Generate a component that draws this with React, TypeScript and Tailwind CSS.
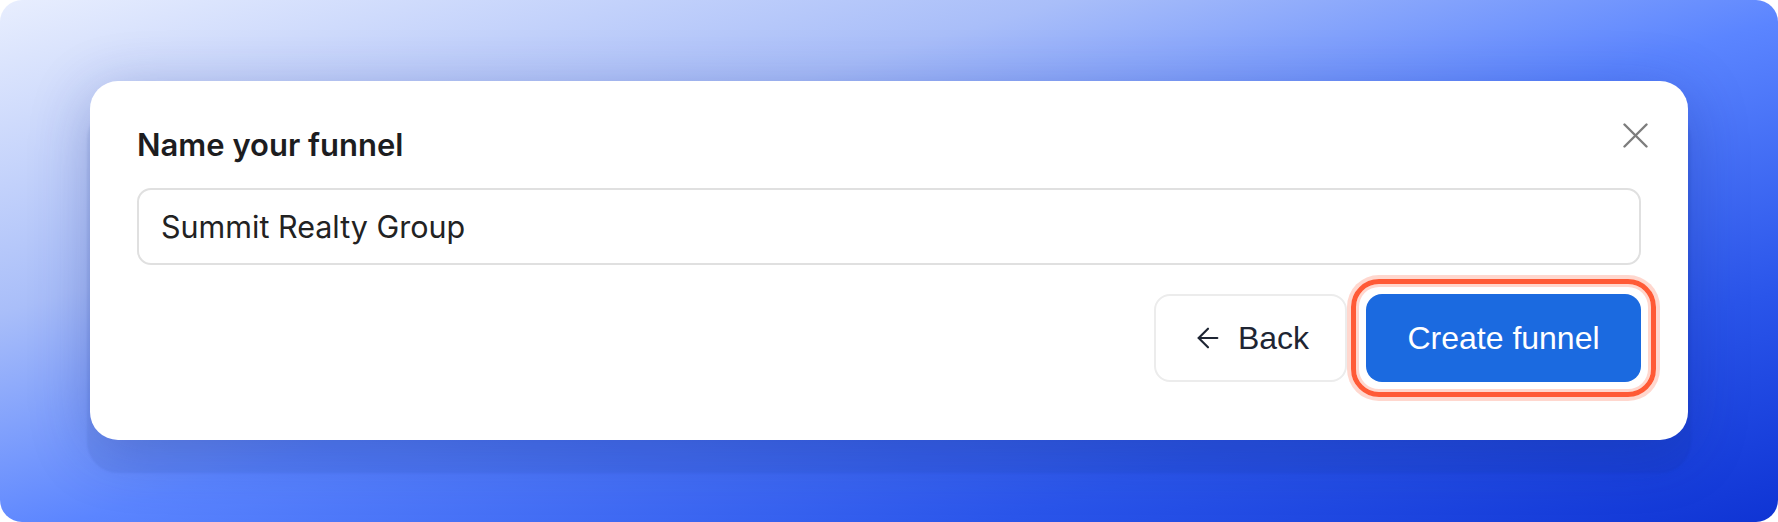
import { ArrowLeft } from "lucide-react"

export default function App() {
  return (
    <div className="w-[1778px] h-[522px] bg-white">
      <div className="flex h-full w-full items-start overflow-hidden rounded-[22px] bg-[linear-gradient(to_bottom_right,#e8eefe_0%,#a9bef9_30%,#5b85ff_52%,#2a55ea_78%,#0f34d4_100%)]">
        {/* Dialog card */}
        <div className="relative ml-[90px] mr-[90px] mt-[81px] flex-1 rounded-[28px] bg-white px-[47px] pb-[58px] pt-[46px] shadow-[0_30px_2px_3px_rgba(15,35,120,0.08),0_12px_60px_rgba(20,40,140,0.3)]">
          <h2 className="text-[31px] font-semibold leading-[36px] text-[#1d1d1f] [font-family:Inter,'Noto_Sans',sans-serif]">
            Name your funnel
          </h2>

          <button className="absolute right-[40px] top-[42px] flex h-[25px] w-[25px] items-center justify-center">
            <svg width="25" height="25" viewBox="0 0 25 25" fill="none" stroke="#7d7d7d" strokeWidth="2.4" strokeLinecap="round">
              <line x1="1.5" y1="1.5" x2="23.5" y2="23.5" />
              <line x1="23.5" y1="1.5" x2="1.5" y2="23.5" />
            </svg>
          </button>

          <input
            readOnly
            defaultValue="Summit Realty Group"
            className="mt-[25px] block h-[77px] w-full rounded-[14px] border-2 border-[#e0e0e0] bg-white pl-[22px] text-[30.5px] text-[#222] outline-none [font-family:Inter,'Noto_Sans',sans-serif]"
          />

          <div className="mt-[29px] flex justify-end gap-[19px] [font-family:'Liberation_Sans',Arial,sans-serif]">
            <button className="flex h-[88px] w-[193px] items-center justify-center gap-[14px] rounded-[16px] border-2 border-[#ececec] bg-white text-[32px] text-[#1e2533]">
              <ArrowLeft size={32} strokeWidth={1.6} />
              <span>Back</span>
            </button>

            <div className="relative">
              {/* highlight ring */}
              <div className="pointer-events-none absolute -inset-[15px] rounded-[28px] border-[5px] border-[#ff5a36] shadow-[0_0_0_4px_#ffd7ce,inset_0_0_0_3px_#ffd7ce]" />
              <button className="flex h-[88px] w-[275px] items-center justify-center rounded-[16px] bg-[#1b6ae0] text-[32px] text-white">
                Create funnel
              </button>
            </div>
          </div>
        </div>
      </div>
    </div>
  )
}
